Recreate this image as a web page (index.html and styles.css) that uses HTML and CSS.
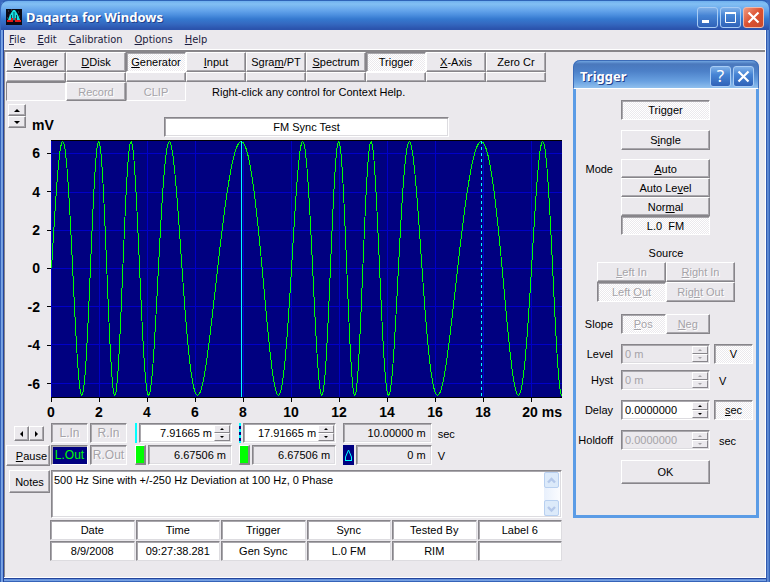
FILE: index.html
```html
<!DOCTYPE html>
<html lang="en">
<head>
    <meta charset="UTF-8">
    <meta name="viewport" content="width=device-width, initial-scale=1.0">
    <title>Daqarta for Windows</title>
    <link rel="stylesheet" href="styles.css">
</head>
<body>

<div class="window">
    <header class="titlebar">
        <svg class="app-icon" viewBox="0 0 16 16" aria-hidden="true">
            <rect width="16" height="16" fill="#0a0a14"/>
            <path d="M2 2h1M5 1h1M12 3h1M3 6h1M13 7h1M1 9h1" stroke="#556" />
            <path d="M7 1H9L11 4L13 8L14 11H2L3 8L5 4Z" fill="#18e0e0"/>
            <path d="M8 3V12M5.500 6V11M10.500 6V11" stroke="#084858"/>
            <path d="M1 11H5V9H7V13H1ZM9 9H10V11H15V13H9Z" fill="#e01818"/>
        </svg>
        <h1>Daqarta for Windows</h1>
        <div class="controls">
            <button type="button" class="ctl" aria-label="Minimize"><svg viewBox="0 0 19 19"><path d="M4 13.500H11" stroke="#fff" stroke-width="3"/></svg></button>
            <button type="button" class="ctl" aria-label="Maximize"><svg viewBox="0 0 19 19"><path d="M4 5H15" stroke="#fff" stroke-width="2"/><path d="M4.500 5V14.500H14.500V5" fill="none" stroke="#fff"/></svg></button>
            <button type="button" class="ctl close" aria-label="Close"><svg viewBox="0 0 19 19"><path d="M4.500 4.500L14.500 14.500M14.500 4.500L4.500 14.500" stroke="#fff" stroke-width="2.200"/></svg></button>
        </div>
    </header>

    <div class="client">
        <nav class="menu">
            <a href="#"><u>F</u>ile</a>
            <a href="#"><u>E</u>dit</a>
            <a href="#"><u>C</u>alibration</a>
            <a href="#"><u>O</u>ptions</a>
            <a href="#"><u>H</u>elp</a>
        </nav>

        <main class="panel">
            <div class="tabs">
                <button type="button" class="btn"><u>A</u>verager</button>
                <button type="button" class="btn"><u>D</u>Disk</button>
                <button type="button" class="btn on"><u>G</u>enerator</button>
                <button type="button" class="btn"><u>I</u>nput</button>
                <button type="button" class="btn">Sgra<u>m</u>/PT</button>
                <button type="button" class="btn"><u>S</u>pectrum</button>
                <button type="button" class="btn on">Trigger</button>
                <button type="button" class="btn"><u>X</u>-Axis</button>
                <button type="button" class="btn">Zero Cr</button>
            </div>
            <div class="tabs strips">
                <button type="button" class="btn" aria-label="Averager dialog"></button>
                <button type="button" class="btn" aria-label="DDisk dialog"></button>
                <button type="button" class="btn" aria-label="Generator dialog"></button>
                <button type="button" class="btn" aria-label="Input dialog"></button>
                <button type="button" class="btn" aria-label="Sgram dialog"></button>
                <button type="button" class="btn" aria-label="Spectrum dialog"></button>
                <button type="button" class="btn" aria-label="Trigger dialog"></button>
                <button type="button" class="btn" aria-label="X-Axis dialog"></button>
                <button type="button" class="btn" aria-label="Zero Cr dialog"></button>
            </div>
            <div class="record-row">
                <span class="meter"></span>
                <button type="button" class="btn" disabled>Record</button>
                <button type="button" class="btn flat" disabled>CLIP</button>
                <p>Right-click any control for Context Help.</p>
            </div>

            <div class="plot-head">
                <div class="scale">
                    <button type="button" class="btn" aria-label="Scale up"><i class="up"></i></button>
                    <button type="button" class="btn" aria-label="Scale down"><i class="down"></i></button>
                </div>
                <span class="unit">mV</span>
                <input class="field plot-title" type="text" aria-label="Plot title" value="FM Sync Test">
            </div>

            <div class="plot">
                <div class="y-axis">
                    <span>6</span><span>4</span><span>2</span><span>0</span><span>-2</span><span>-4</span><span>-6</span>
                </div>
                <svg class="scope" viewBox="0 0 511 256" preserveAspectRatio="none" role="img" aria-label="Waveform">
                    <path class="grid" d="M0 12.500H511M0 51.500H511M0 89.500H511M0 127.500H511M0 165.500H511M0 203.500H511M0 242.500H511"/>
                    <path class="grid" d="M.5 0V256M48.500 0V256M96.500 0V256M144.500 0V256M192.500 0V256M240.500 0V256M288.500 0V256M336.500 0V256M384.500 0V256M432.500 0V256M480.500 0V256"/>
                    <path class="trace" id="trace"/>
                    <path class="cursor" d="M190.500 0V256"/>
                    <path class="cursor dashed" d="M430.500 0V256"/>
                </svg>
                <div class="x-axis">
                    <span>0</span><span>2</span><span>4</span><span>6</span><span>8</span><span>10</span><span>12</span><span>14</span><span>16</span><span>18</span><span class="last">20 ms</span>
                </div>
            </div>

            <div class="readouts">
                <div class="arrows">
                    <button type="button" class="btn" aria-label="Scroll left"><i class="left"></i></button>
                    <button type="button" class="btn" aria-label="Scroll right"><i class="right"></i></button>
                </div>
                <button type="button" class="channel" disabled>L.In</button>
                <button type="button" class="channel" disabled>R.In</button>
                <div class="reading">
                    <span class="bar"></span>
                    <div class="field spin">
                        <input type="text" aria-label="Cursor time" value="7.91665 m">
                        <span class="spinner"><button type="button" class="btn" aria-label="Increase"><i class="up"></i></button><button type="button" class="btn" aria-label="Decrease"><i class="down"></i></button></span>
                    </div>
                </div>
                <div class="reading">
                    <span class="bar dashes"></span>
                    <div class="field spin">
                        <input type="text" aria-label="Second cursor time" value="17.91665 m">
                        <span class="spinner"><button type="button" class="btn" aria-label="Increase"><i class="up"></i></button><button type="button" class="btn" aria-label="Decrease"><i class="down"></i></button></span>
                    </div>
                </div>
                <div class="reading"><output class="field">10.00000 m</output></div>
                <span class="suffix">sec</span>

                <button type="button" class="btn pause"><u>P</u>ause</button>
                <button type="button" class="channel active">L.Out</button>
                <button type="button" class="channel" disabled>R.Out</button>
                <div class="reading"><button type="button" class="color" aria-label="Trace colour"></button><output class="field">6.67506 m</output></div>
                <div class="reading"><button type="button" class="color" aria-label="Trace colour"></button><output class="field">6.67506 m</output></div>
                <div class="reading">
                    <button type="button" class="delta" aria-label="Delta"><svg viewBox="0 0 11 20"><path d="M2 15.500H9M2.500 15V12L5.500 5L8.500 12V15" fill="none" stroke="#00ffff"/></svg></button>
                    <output class="field">0 m</output>
                </div>
                <span class="suffix">V</span>
            </div>

            <div class="notes">
                <button type="button" class="btn">Notes</button>
                <div class="field note-box">
                    <textarea aria-label="Notes">500 Hz Sine with +/-250 Hz Deviation at 100 Hz, 0 Phase</textarea>
                    <div class="scroll">
                        <button type="button" aria-label="Scroll up"><svg viewBox="0 0 13 13"><path d="M3 8.500L6.500 5L10 8.500" fill="none" stroke="#b4c8ea" stroke-width="2.400"/></svg></button>
                        <button type="button" aria-label="Scroll down"><svg viewBox="0 0 13 13"><path d="M3 5L6.500 8.500L10 5" fill="none" stroke="#b4c8ea" stroke-width="2.400"/></svg></button>
                    </div>
                </div>
            </div>

            <table class="labels">
                <thead>
                    <tr><th>Date</th><th>Time</th><th>Trigger</th><th>Sync</th><th>Tested By</th><th>Label 6</th></tr>
                </thead>
                <tbody>
                    <tr><td>8/9/2008</td><td>09:27:38.281</td><td>Gen Sync</td><td>L.0 FM</td><td>RIM</td><td></td></tr>
                </tbody>
            </table>
        </main>
    </div>

    <section class="dialog" role="dialog" aria-labelledby="dialogTitle">
        <header class="dialog-title">
            <h2 id="dialogTitle">Trigger</h2>
            <button type="button" class="ctl help" aria-label="Help">?</button>
            <button type="button" class="ctl" aria-label="Close dialog"><svg viewBox="0 0 19 19"><path d="M4.500 4.500L14.500 14.500M14.500 4.500L4.500 14.500" stroke="#fff" stroke-width="2.200"/></svg></button>
        </header>
        <form class="dialog-body">
            <div class="row">
                <button type="button" class="btn mid on">Trigger</button>
            </div>
            <div class="row">
                <button type="button" class="btn mid">S<u>i</u>ngle</button>
            </div>
            <div class="row modes">
                <span class="name">Mode</span>
                <div class="stack">
                    <button type="button" class="btn"><u>A</u>uto</button>
                    <button type="button" class="btn">Auto Le<u>v</u>el</button>
                    <button type="button" class="btn">Nor<u>m</u>al</button>
                    <button type="button" class="btn on">L.0&nbsp; FM</button>
                </div>
            </div>
            <p class="source-title">Source</p>
            <div class="sources">
                <button type="button" class="btn" disabled><u>L</u>eft In</button>
                <button type="button" class="btn" disabled><u>R</u>ight In</button>
                <button type="button" class="btn on" disabled>Left <u>O</u>ut</button>
                <button type="button" class="btn" disabled>Rig<u>h</u>t Out</button>
            </div>
            <div class="row">
                <span class="name">Slope</span>
                <div class="pair">
                    <button type="button" class="btn on" disabled><u>P</u>os</button>
                    <button type="button" class="btn" disabled><u>N</u>eg</button>
                </div>
            </div>
            <div class="row">
                <label class="name" for="level">Level</label>
                <div class="field spin off">
                    <input type="text" id="level" value="0 m" disabled>
                    <span class="spinner"><button type="button" class="btn" aria-label="Increase level" disabled><i class="up"></i></button><button type="button" class="btn" aria-label="Decrease level" disabled><i class="down"></i></button></span>
                </div>
                <button type="button" class="btn on">V</button>
            </div>
            <div class="row close-up">
                <label class="name" for="hyst">Hyst</label>
                <div class="field spin off">
                    <input type="text" id="hyst" value="0 m" disabled>
                    <span class="spinner"><button type="button" class="btn" aria-label="Increase hysteresis" disabled><i class="up"></i></button><button type="button" class="btn" aria-label="Decrease hysteresis" disabled><i class="down"></i></button></span>
                </div>
                <span class="suffix">V</span>
            </div>
            <div class="row">
                <label class="name" for="delay">Delay</label>
                <div class="field spin">
                    <input type="text" id="delay" value="0.0000000">
                    <span class="spinner"><button type="button" class="btn" aria-label="Increase delay"><i class="up"></i></button><button type="button" class="btn" aria-label="Decrease delay"><i class="down"></i></button></span>
                </div>
                <button type="button" class="btn on"><u>s</u>ec</button>
            </div>
            <div class="row">
                <label class="name" for="holdoff">Holdoff</label>
                <div class="field spin off">
                    <input type="text" id="holdoff" value="0.0000000" disabled>
                    <span class="spinner"><button type="button" class="btn" aria-label="Increase holdoff" disabled><i class="up"></i></button><button type="button" class="btn" aria-label="Decrease holdoff" disabled><i class="down"></i></button></span>
                </div>
                <span class="suffix">sec</span>
            </div>
            <div class="row ok">
                <button type="button" class="btn mid">OK</button>
            </div>
        </form>
    </section>
</div>

<script src="script.js"></script>
</body>
</html>
```
FILE: styles.css
```css
* {
    box-sizing: border-box;
}

body {
    margin: 0;
    font-family: "Liberation Sans", Arial, sans-serif;
    font-size: 11px;
    line-height: 14px;
    color: #000;
    background-color: #3a6ac0;
}

button, input, textarea, output {
    font: inherit;
    color: inherit;
    margin: 0;
    padding: 0;
}

h1, h2, p {
    margin: 0;
}

/* Main window */
.window {
    position: relative;
    display: flex;
    flex-direction: column;
    min-height: 100vh;
    padding: 0 4px 4px;
    border-radius: 8px 8px 0 0;
    background: linear-gradient(90deg, #3563b8 0, #3563b8 1px, #7fa8e6 1px, #6b98e0 3px, #24459c 3px, #24459c 4px, transparent 4px, transparent calc(100% - 4px), #24459c calc(100% - 4px), #3f6fc4 calc(100% - 3px), #7fa8e6 calc(100% - 2px), #3563b8 calc(100% - 1px)), linear-gradient(0deg, #3563b8 1px, #7fa8e6 1px, #5c8ad8 3px, #24459c 3px);
}

.titlebar {
    display: flex;
    align-items: center;
    gap: 4px;
    height: 30px;
    margin: 0 -4px;
    padding: 3px 5px 0 5px;
    border-radius: 8px 8px 0 0;
    border-top: 1px solid #2f64b8;
    border-left: 1px solid #3a6cc0;
    border-right: 1px solid #3a6cc0;
    background: linear-gradient(#6fb0ee 0, #82bff3 3px, #62a2ea 10px, #4c8fdf 14px, #3579cf 18px, #3468c0 23px, #2b53ac 28px);
}

.app-icon {
    width: 16px;
    height: 16px;
}

.titlebar h1, .dialog-title h2 {
    flex: 1;
    font-family: "Noto Sans", "Open Sans", sans-serif;
    font-size: 13px;
    font-weight: bold;
    line-height: 18px;
    color: #fff;
    text-shadow: 1px 1px 0 #23418c;
}

.controls {
    display: flex;
    gap: 2px;
}

.ctl {
    width: 21px;
    height: 21px;
    border: 1px solid #a8ccf4;
    border-radius: 3px;
    background: linear-gradient(#7fb0e8, #4684d4 40%, #2f62b8);
    color: #fff;
}

.ctl svg {
    display: block;
    width: 19px;
    height: 19px;
}

.ctl.close {
    border-color: #f0b8a8;
    background: linear-gradient(135deg, #f09a80, #dc5030 50%, #c84a2c);
}

.client {
    flex: 1;
    display: flex;
    flex-direction: column;
    background-color: #ebe9ed;
    border-right: 1px solid #fff;
    border-bottom: 1px solid #fff;
}

.menu {
    display: flex;
    gap: 12px;
    height: 20px;
    padding: 2px 5px;
    border-bottom: 1px solid #fff;
    font-family: "DejaVu Sans Condensed", "DejaVu Sans", sans-serif;
    line-height: 16px;
}

.menu a {
    color: #1c1c3c;
    text-decoration: none;
}

.panel {
    flex: 1;
    padding: 0 203px 0 1px;
    border-top: 2px solid #88868a;
    border-left: 1px solid #88868a;
}

/* Buttons */
.btn {
    border: 1px solid #fff;
    border-right-color: #87858a;
    border-bottom-color: #87858a;
    box-shadow: inset -1px -1px 0 #a9a7ac;
    background-color: #ebe9ed;
    text-align: center;
    white-space: nowrap;
}

.btn.on {
    border: 1px solid #fff;
    border-top-color: #87858a;
    border-left-color: #87858a;
    box-shadow: inset 1px 1px 0 #a9a7ac;
    background: repeating-conic-gradient(#fff 0 25%, #ebe9ed 0 50%) 0 0 / 2px 2px;
}

.btn:disabled, .channel:disabled {
    color: #a5a3a8;
    text-shadow: 1px 1px 0 #fff;
}

.btn.flat {
    border: 1px solid #fff;
    border-top-color: #ebe9ed;
    border-left-color: #a5a3a8;
    box-shadow: none;
}

.tabs {
    display: grid;
    grid-template-columns: repeat(9, 60px);
}

.tabs .btn {
    height: 20px;
}

.strips .btn {
    height: 10px;
}

.record-row {
    display: flex;
    align-items: center;
}

.record-row .btn, .meter {
    width: 60px;
    height: 19px;
}

.meter {
    border: 1px solid #fff;
    border-top-color: #87858a;
    border-left-color: #87858a;
}

.record-row p {
    margin-left: 26px;
}

/* Small arrows on the spin buttons */
i {
    display: block;
    width: 0;
    height: 0;
    margin: auto;
    border: 3px solid transparent;
}

.up {
    border-top: 0;
    border-bottom-color: currentColor;
}

.down {
    border-bottom: 0;
    border-top-color: currentColor;
}

.left {
    border-left: 0;
    border-right-color: currentColor;
}

.right {
    border-right: 0;
    border-left-color: currentColor;
}

/* Sunken boxes */
.field {
    padding: 1px;
    border: 1px solid #87858a;
    border-right-color: #fff;
    border-bottom-color: #fff;
    box-shadow: inset 1px 1px 0 #a9a7ac, inset -1px -1px 0 #dddce0;
    background-color: #fff;
}

.plot-head {
    display: flex;
    align-items: flex-start;
    height: 39px;
    padding: 3px 0 0 2px;
}

.scale {
    display: flex;
    flex-direction: column;
}

.scale .btn {
    width: 18px;
    height: 12px;
}

.unit {
    width: 138px;
    padding: 13px 0 0 6px;
    font-size: 14px;
    font-weight: bold;
    line-height: 16px;
}

.plot-title {
    width: 285px;
    height: 20px;
    margin-top: 13px;
    text-align: center;
}

.plot {
    display: grid;
    grid-template-columns: 45px 1fr;
    grid-template-rows: 258px 25px;
    font-size: 14px;
    font-weight: bold;
    line-height: 16px;
}

.y-axis {
    display: grid;
    grid-template-rows: repeat(7, 1fr);
    align-items: center;
    margin: -6px 0 -5px;
    text-align: right;
}

.y-axis span {
    display: flex;
    align-items: center;
    justify-content: flex-end;
    gap: 7px;
}

.y-axis span::after {
    content: "";
    width: 4px;
    height: 1px;
    background-color: #000;
}

.scope {
    display: block;
    width: 100%;
    height: 258px;
    border-top: 1px solid #000;
    border-bottom: 1px solid #000;
    background-color: #000080;
}

.scope path {
    fill: none;
    vector-effect: non-scaling-stroke;
}

.grid {
    stroke: #0000c8;
    shape-rendering: crispEdges;
}

.trace {
    stroke: #00ff00;
    stroke-width: 1;
    shape-rendering: crispEdges;
}

.cursor {
    stroke: #00ffff;
    shape-rendering: crispEdges;
}

.dashed {
    stroke-dasharray: 3 3;
}

.x-axis {
    grid-column: 2;
    display: grid;
    grid-template-columns: repeat(10, 48fr) 55fr;
    margin-left: -24px;
    text-align: center;
}

.x-axis span::before {
    content: "";
    display: block;
    width: 1px;
    height: 4px;
    margin: 0 auto 2px;
    background-color: #000;
}

.x-axis .last {
    text-align: right;
}

.x-axis .last::before {
    margin-left: 24px;
}

/* Cursor readouts */
.readouts {
    display: grid;
    grid-template-columns: 44px 38px 38px 98fr 98fr 90fr 123fr;
    grid-template-rows: 21px 21px;
    gap: 1px;
}

.arrows {
    display: flex;
    align-items: center;
    justify-content: flex-end;
    padding-right: 6px;
}

.arrows .btn {
    width: 15px;
    height: 15px;
}

.pause {
    padding-right: 2px;
    text-align: right;
}

.channel {
    margin: 0 1px 1px 0;
    border: 1px solid #87858a;
    border-right-color: #fff;
    border-bottom-color: #fff;
    box-shadow: inset 1px 1px 0 #a9a7ac;
    background-color: #ebe9ed;
    font-size: 12px;
}

.channel.active {
    background-color: #000080;
    color: #00ff00;
}

.reading {
    display: flex;
    gap: 2px;
    margin-left: 6px;
}

.reading .field {
    flex: 1;
    min-width: 0;
    height: 20px;
    text-align: right;
}

.reading output {
    padding: 2px 5px 0 0;
    background-color: #ebe9ed;
}

.bar {
    width: 2px;
    height: 20px;
    background-color: #00ffff;
}

.dashes {
    background: repeating-linear-gradient(#00ffff 0 3px, #000080 3px 6px);
}

.color {
    width: 11px;
    height: 20px;
    border: 1px solid #fff;
    border-right: 2px solid #87858a;
    border-bottom: 2px solid #87858a;
    background-color: #00ff00;
}

.delta {
    width: 11px;
    height: 20px;
    border: 0;
    background-color: #000080;
}

.delta svg {
    display: block;
    width: 11px;
    height: 20px;
}

.suffix {
    padding: 4px 0 0 5px;
}

.spin {
    display: flex;
    height: 20px;
}

.spin input {
    flex: 1;
    width: 0;
    border: 0;
    padding: 0 2px;
    background: none;
    text-align: inherit;
}

.spinner {
    display: flex;
    flex-direction: column;
    width: 16px;
}

.spinner .btn {
    flex: 1;
    min-height: 0;
    box-shadow: none;
}

.spinner i {
    border-width: 2px;
}

.spinner .up {
    border-top: 0;
}

.spinner .down {
    border-bottom: 0;
}

.off {
    background-color: #ebe9ed;
}

.off input {
    color: #a5a3a8;
}

/* Notes */
.notes {
    display: flex;
    align-items: flex-start;
    gap: 1px;
    margin: 4px 0 2px 3px;
}

.notes > .btn {
    width: 41px;
    height: 23px;
}

.note-box {
    flex: 1;
    display: flex;
    height: 48px;
}

.note-box textarea {
    flex: 1;
    border: 0;
    padding: 1px;
    resize: none;
    background: none;
    overflow: hidden;
}

.scroll {
    display: flex;
    flex-direction: column;
    justify-content: space-between;
    width: 16px;
    background: linear-gradient(90deg, #e8f0fc, #fbfcff);
}

.scroll button {
    width: 15px;
    height: 16px;
    border: 1px solid #b8d0f0;
    border-radius: 2px;
    background-color: #dceafa;
}

.scroll svg {
    display: block;
    width: 13px;
    height: 13px;
}

.labels {
    width: calc(100% - 42px);
    margin-left: 43px;
    border-collapse: separate;
    border-spacing: 1px;
    margin-top: -1px;
    table-layout: fixed;
}

.labels th, .labels td {
    height: 20px;
    padding: 0;
    border: 1px solid #87858a;
    border-right-color: #dddce0;
    border-bottom-color: #dddce0;
    box-shadow: inset 1px 1px 0 #a9a7ac;
    background-color: #fff;
    font-weight: normal;
    text-align: center;
}

/* Floating trigger dialog */
.dialog {
    position: absolute;
    top: 60px;
    right: 11px;
    width: 186px;
    height: 458px;
    border-radius: 7px 7px 0 0;
    border: 3px solid #5b9ce6;
    border-top: 0;
    background-color: #ebe9ed;
}

.dialog-title {
    display: flex;
    align-items: center;
    gap: 2px;
    height: 29px;
    margin: 0 -3px;
    padding: 3px 4px 0 6px;
    border-radius: 7px 7px 0 0;
    border: 1px solid #3c6cb8;
    border-bottom: 1px solid #fff;
    background: linear-gradient(#6fa4e0 0, #4a78bc 3px, #4c80c8 10px, #68a0e0 20px, #90c0ee 27px);
}

.help {
    font-family: "Noto Sans", "Open Sans", sans-serif;
    font-size: 17px;
    line-height: 18px;
}

.dialog-body {
    display: flex;
    flex-direction: column;
    gap: 10px;
    padding: 11px 3px 0;
}

.row {
    display: grid;
    grid-template-columns: 32px 89px 39px;
    column-gap: 4px;
    align-items: start;
    justify-content: end;
}

.row .btn, .sources .btn {
    height: 20px;
}

.row .mid {
    grid-column: 2;
}

.name {
    display: flex;
    justify-content: flex-end;
    padding: 3px 4px 0 0;
    white-space: nowrap;
}

.stack {
    display: grid;
}

.row .stack .btn {
    height: 19px;
}

.row .spinner .btn {
    height: auto;
}

.modes {
    margin-top: -1px;
}

.source-title {
    margin-top: 1px;
    text-align: center;
}

.sources {
    display: grid;
    grid-template-columns: 69px 69px;
    justify-content: center;
    margin: -8px 0 2px;
}

.pair {
    display: grid;
    grid-template-columns: 1fr 1fr;
}

.close-up {
    margin-top: -4px;
}

.row.ok .btn {
    height: 24px;
}
```
FILE: script.js
```javascript
// 500 Hz sine, +/-250 Hz deviation at 100 Hz. 24 units per ms, 19 units per mV.
var points = [];
for (var x = 0; x <= 511; x += 0.5) {
    var t = x / 24;
    var phase = Math.PI * t + 2.5 * (1 - Math.cos(0.2 * Math.PI * t));
    var y = 127.5 - 19 * 6.67506 * Math.sin(phase);
    points.push((x + 0.5) + " " + y.toFixed(1));
}
document.getElementById("trace").setAttribute("d", "M" + points.join("L"));
```
